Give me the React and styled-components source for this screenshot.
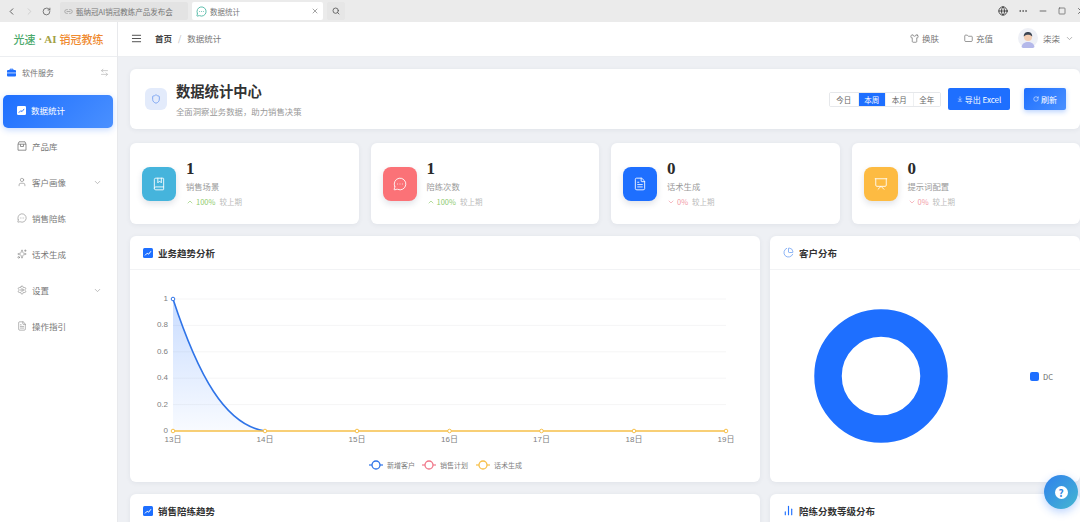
import styled, { createGlobalStyle } from "styled-components";
import {
  ArrowLeftRight,
  AlignJustify,
  BookMarked,
  ChartNoAxesColumn,
  ChartPie,
  ChevronDown,
  ChevronLeft,
  ChevronRight,
  ChevronUp,
  Ellipsis,
  FileText,
  Folder,
  Globe,
  Link2,
  MessageCircleMore,
  Minus,
  Presentation,
  RotateCw,
  Search,
  Settings,
  Shield,
  Shirt,
  Sparkles,
  Square,
  User,
  X,
  ArrowDownToLine,
} from "lucide-react";

const GlobalStyle = createGlobalStyle`
  html, body {
    margin: 0;
    height: 100%;
    overflow: hidden;
    background: #eef0f4;
    font-family: "Noto Sans CJK SC", "Noto Sans", "Liberation Sans", sans-serif;
  }
  * { box-sizing: border-box; }
`;

const Page = styled.div`
  width: 1080px;
  height: 522px;
  display: flex;
  flex-direction: column;
  overflow: hidden;
  position: relative;
`;

/* browser chrome */
const BrowserBar = styled.div`
  height: 22px;
  flex: none;
  display: flex;
  align-items: center;
  background: #ebebeb;
  color: #555;
  padding: 0 0 0 6px;
`;

const NavIcons = styled.div`
  display: flex;
  align-items: center;
  gap: 7px;
  width: 54px;
`;

const Tab = styled.div`
  height: 18px;
  width: ${(p) => p.$width}px;
  margin-right: 4px;
  display: flex;
  align-items: center;
  gap: 3px;
  padding: 0 4px;
  font-size: 7.5px;
  color: #777;
  border-radius: 2px;
  background: ${(p) => (p.$active ? "#fff" : "#e3e3e3")};
`;

const TabTitle = styled.span`
  flex: 1;
  white-space: nowrap;
  overflow: hidden;
`;

const SearchBox = styled.div`
  width: 18px;
  height: 18px;
  display: flex;
  align-items: center;
  justify-content: center;
  background: #e6e6e6;
  border-radius: 2px;
`;

const WindowControls = styled.div`
  margin-left: auto;
  display: flex;
  align-items: center;
  gap: 10px;
  margin-right: -6px;
`;

const Body = styled.div`
  flex: 1;
  display: flex;
  min-height: 0;
`;

/* sidebar */
const Sidebar = styled.aside`
  width: 118px;
  flex: none;
  background: #fff;
  border-right: 1px solid #e8e9ec;
  display: flex;
  flex-direction: column;
`;

const Logo = styled.div`
  height: 35px;
  display: flex;
  align-items: center;
  justify-content: center;
  gap: 3px;
  font-size: 11px;
  font-weight: 500;
  white-space: nowrap;
  border-bottom: 1px solid #eceef1;
`;

const LogoPart = styled.span`
  color: ${(p) => p.$color};
  font-family: ${(p) => (p.$serif ? '"Liberation Serif", serif' : "inherit")};
  font-weight: ${(p) => (p.$serif ? 700 : 500)};
`;

const ServiceRow = styled.div`
  height: 32px;
  padding: 0 8px 2px 7px;
  display: flex;
  align-items: center;
  gap: 6px;
  font-size: 8px;
  color: #777;
`;

const ServiceLabel = styled.span`
  flex: 1;
`;

const Menu = styled.nav`
  margin-top: 6px;
  display: flex;
  flex-direction: column;
  gap: 3px;
  padding: 0 4px 0 3px;
`;

const MenuItem = styled.div`
  height: 33px;
  display: flex;
  align-items: center;
  gap: 5px;
  padding: 0 11px 3px 14px;
  font-size: 8.5px;
  border-radius: 5px;
  color: ${(p) => (p.$active ? "#fff" : "#777")};
  background: ${(p) =>
    p.$active ? "linear-gradient(135deg, #1e6fff, #4a90ff)" : "transparent"};
  box-shadow: ${(p) => (p.$active ? "0 2px 6px rgba(30,111,255,.25)" : "none")};
`;

const MenuLabel = styled.span`
  flex: 1;
`;

/* main column */
const Main = styled.main`
  flex: 1;
  min-width: 0;
  display: flex;
  flex-direction: column;
`;

const Header = styled.header`
  height: 35px;
  flex: none;
  background: #fff;
  display: flex;
  align-items: center;
  padding: 0 6px 2px 13px;
  color: #777;
  font-size: 8.5px;
  border-bottom: 1px solid #eceef1;
`;

const Crumbs = styled.div`
  display: flex;
  align-items: center;
  gap: 6px;
  margin-left: 13px;
`;

const CrumbHome = styled.span`
  font-weight: 700;
  color: #444;
`;

const CrumbSep = styled.span`
  color: #bbb;
`;

const HeaderActions = styled.div`
  margin-left: auto;
  display: flex;
  align-items: center;
  gap: 25px;
`;

const HeaderAction = styled.div`
  display: flex;
  align-items: center;
  gap: 3px;
`;

const UserBox = styled.div`
  display: flex;
  align-items: center;
  gap: 5px;
`;

const Content = styled.div`
  flex: 1;
  min-height: 0;
  display: flex;
  flex-direction: column;
  gap: 12px;
  padding: 12px 0 0 12px;
  overflow: hidden;
`;

const Card = styled.section`
  background: #fff;
  border-radius: 6px;
  box-shadow: 0 1px 5px rgba(40, 60, 90, 0.07);
`;

const Hero = styled(Card)`
  height: 60px;
  flex: none;
  margin-bottom: 2px;
  display: flex;
  align-items: center;
  padding: 0 14px 0 15px;
`;

const HeroIcon = styled.div`
  width: 22px;
  height: 22px;
  border-radius: 6px;
  background: #e3ebfb;
  color: #6f9bf0;
  display: flex;
  align-items: center;
  justify-content: center;
  margin-right: 9px;
`;

const HeroText = styled.div`
  display: flex;
  flex-direction: column;
  gap: 3px;
`;

const HeroTitle = styled.div`
  font-size: 14.3px;
  line-height: 20px;
  font-weight: 700;
  color: #333;
`;

const HeroSub = styled.div`
  font-size: 8.4px;
  line-height: 14px;
  color: #999;
`;

const HeroActions = styled.div`
  margin-left: auto;
  display: flex;
  align-items: center;
`;

const Segments = styled.div`
  display: flex;
  height: 15px;
  border: 1px solid #e6e8eb;
  border-radius: 2px;
  margin-right: 7px;
`;

const Segment = styled.div`
  width: 27.5px;
  display: flex;
  align-items: center;
  justify-content: center;
  font-size: 7.5px;
  color: ${(p) => (p.$active ? "#fff" : "#666")};
  background: ${(p) => (p.$active ? "#1e6fff" : "#fff")};
  border-left: ${(p) => (p.$first ? "none" : "1px solid #eef0f2")};
`;

const ActionButton = styled.button`
  height: 22px;
  width: ${(p) => p.$width}px;
  margin-left: ${(p) => p.$gap || 0}px;
  border: none;
  border-radius: 2px;
  padding: 0;
  display: flex;
  align-items: center;
  justify-content: center;
  gap: 2px;
  color: #fff;
  font-family: inherit;
  font-size: 8px;
  background: ${(p) =>
    p.$soft ? "linear-gradient(135deg, #1e6fff, #4a90ff)" : "#1e6fff"};
  box-shadow: ${(p) => (p.$soft ? "0 2px 5px rgba(30,111,255,.3)" : "none")};
`;

const StatsGrid = styled.div`
  flex: none;
  display: grid;
  grid-template-columns: repeat(4, 1fr);
  gap: 12px;
`;

const StatCard = styled(Card)`
  height: 81px;
  display: flex;
  align-items: center;
  gap: 10px;
  padding: 0 12px;
`;

const StatIcon = styled.div`
  width: 34px;
  height: 34px;
  flex: none;
  border-radius: 8px;
  background: ${(p) => p.$color};
  color: #fff;
  display: flex;
  align-items: center;
  justify-content: center;
  box-shadow: 0 3px 6px rgba(40, 60, 90, 0.14);
`;

const StatBody = styled.div`
  display: flex;
  flex-direction: column;
  padding-top: 3px;
`;

const StatValue = styled.div`
  font-family: "Liberation Serif", serif;
  font-weight: 700;
  font-size: 17px;
  line-height: 18px;
  color: #2a2a2a;
`;

const StatLabel = styled.div`
  font-size: 8.3px;
  line-height: 16px;
  color: #999;
`;

const StatChange = styled.div`
  display: flex;
  align-items: center;
  gap: 2px;
  font-size: 7.5px;
  line-height: 16px;
  color: #bbb;
`;

const ChangeValue = styled.span`
  color: ${(p) => (p.$up ? "#8fcb6e" : "#f29aa6")};
  margin-right: 2px;
`;

const PanelRow = styled.div`
  flex: none;
  display: grid;
  grid-template-columns: 630px 310px;
  gap: 10px;
`;

const Panel = styled(Card)`
  height: ${(p) => p.$height}px;
  display: flex;
  flex-direction: column;
`;

const PanelHead = styled.div`
  height: 34px;
  flex: none;
  display: flex;
  align-items: center;
  gap: 5px;
  padding: 0 13px;
  border-bottom: 1px solid #f2f3f5;
  font-size: 9.5px;
  font-weight: 700;
  color: #333;
`;

const DonutBody = styled.div`
  flex: 1;
  display: flex;
  align-items: center;
  padding-left: 44px;
`;

const Legend = styled.div`
  display: flex;
  align-items: center;
  gap: 4px;
  margin-left: 82px;
  font-size: 7.5px;
  color: #666;
`;

const LegendSwatch = styled.span`
  width: 9px;
  height: 9px;
  border-radius: 2px;
  background: #1e6fff;
`;

const HelpButton = styled.div`
  position: absolute;
  left: 1044px;
  top: 475px;
  width: 34px;
  height: 34px;
  border-radius: 50%;
  background: linear-gradient(135deg, #2f80ed, #45b7d1);
  box-shadow: 0 3px 8px rgba(30, 111, 255, 0.3);
  display: flex;
  align-items: center;
  justify-content: center;
`;

const HelpMark = styled.span`
  width: 13px;
  height: 13px;
  border-radius: 50%;
  background: #fff;
  color: #2f86e0;
  font-size: 10px;
  font-weight: 700;
  line-height: 13px;
  text-align: center;
`;

const ChartLabel = styled.text`
  font-size: ${(p) => p.$size || 8}px;
  fill: #808080;
  font-family: "Liberation Sans", "Noto Sans CJK SC", sans-serif;
`;

const ChartSvg = styled.svg`
  display: block;
`;

const TrendBox = ({ size = 10, bg = "#1e6fff", fg = "#fff" }) => (
  <svg width={size} height={size} viewBox="0 0 10 10" style={{ flex: "none" }}>
    <rect width="10" height="10" rx="1.5" fill={bg} />
    <path d="M2 7.4 4.2 5.2 5.6 6.2 8 3.2" fill="none" stroke={fg} strokeWidth="1" />
  </svg>
);

const CaseIcon = () => (
  <svg width="9" height="9" viewBox="0 0 9 9" style={{ flex: "none" }}>
    <path d="M3 2V1.200h3V2" fill="none" stroke="#1e6fff" />
    <rect y="2" width="9" height="6.500" rx="1" fill="#1e6fff" />
    <rect y="4.600" width="9" height="0.700" fill="#fff" />
  </svg>
);

const ProductIcon = () => (
  <svg width="10" height="10" viewBox="0 0 10 10" fill="none" stroke="currentColor" strokeWidth="0.8" style={{ flex: "none" }}>
    <path d="M1 3.200 2 .8h6l1 2.400V9.200H1z" />
    <path d="M1 3.200h8M3.500 3.200V5.500h3V3.200" />
  </svg>
);

const Avatar = () => (
  <svg width="20" height="20" viewBox="0 0 20 20">
    <circle cx="10" cy="10" r="10" fill="#eef0f6" />
    <path d="M3.500 19c.6-3.600 3.200-5 6.500-5s5.900 1.400 6.500 5a10 10 0 0 1-13 0z" fill="#b4b8ea" />
    <circle cx="10" cy="9" r="4" fill="#f3cdb3" />
    <path d="M5.800 8.500C5.600 5.200 7.800 4 10 4s4.400 1.200 4.200 4.500C13 7 11 6.700 10 6.700S7 7 5.800 8.500z" fill="#3d4654" />
  </svg>
);

const days = ["13日", "14日", "15日", "16日", "17日", "18日", "19日"];
const dayX = [43, 135, 227, 319.5, 411.5, 504, 596];
const ticks = [
  ["1", 29],
  ["0.8", 55.4],
  ["0.6", 81.8],
  ["0.4", 108.2],
  ["0.2", 134.6],
  ["0", 161],
];
const legend = [
  ["新增客户", 246, "#2f74e8"],
  ["销售计划", 299, "#f0788a"],
  ["话术生成", 353, "#f7c04a"],
];

const TrendChart = () => (
  <ChartSvg width="630" height="212" viewBox="0 0 630 212">
    <defs>
      <linearGradient id="area" x1="0" y1="0" x2="0" y2="1">
        <stop offset="0" stopColor="#1e6fff" stopOpacity="0.24" />
        <stop offset="1" stopColor="#1e6fff" stopOpacity="0.03" />
      </linearGradient>
    </defs>
    {ticks.map(([label, y]) => (
      <g key={label}>
        <line x1="43" x2="596" y1={y} y2={y} stroke="#f5f5f6" />
        <ChartLabel x="38" y={y + 2} textAnchor="end">
          {label}
        </ChartLabel>
      </g>
    ))}
    <path d="M43 29C68 105 95 155 135 161H43Z" fill="url(#area)" />
    <path d="M43 29C68 105 95 155 135 161" fill="none" stroke="#2f74e8" strokeWidth="1.600" />
    <line x1="43" x2="596" y1="161" y2="161" stroke="#f7c04a" strokeWidth="1.600" />
    <circle cx="43" cy="29" r="1.800" fill="#fff" stroke="#2f74e8" />
    {days.map((day, i) => (
      <g key={day}>
        <circle cx={dayX[i]} cy="161" r="1.800" fill="#fff" stroke="#f7c04a" />
        <ChartLabel x={dayX[i]} y="172" textAnchor="middle">
          {day}
        </ChartLabel>
      </g>
    ))}
    {legend.map(([label, x, color]) => (
      <g key={label}>
        <line x1={x - 7} x2={x + 7} y1="195" y2="195" stroke={color} strokeWidth="1.200" />
        <circle cx={x} cy="195" r="4" fill="#fff" stroke={color} strokeWidth="1.300" />
        <ChartLabel x={x + 11} y="197.500" $size={7}>
          {label}
        </ChartLabel>
      </g>
    ))}
  </ChartSvg>
);

const Donut = () => (
  <svg width="134" height="134" viewBox="0 0 134 134">
    <circle cx="67" cy="67" r="53" fill="none" stroke="#1e6fff" strokeWidth="27.500" />
  </svg>
);

const menuItems = [
  { label: "数据统计", icon: <TrendBox bg="#fff" fg="#1e6fff" size={9} />, active: true },
  { label: "产品库", icon: <ProductIcon /> },
  { label: "客户画像", icon: <User size={10} strokeWidth={1.3} />, more: true },
  { label: "销售陪练", icon: <MessageCircleMore size={10} strokeWidth={1.3} /> },
  { label: "话术生成", icon: <Sparkles size={10} strokeWidth={1.3} /> },
  { label: "设置", icon: <Settings size={10} strokeWidth={1.3} />, more: true },
  { label: "操作指引", icon: <FileText size={10} strokeWidth={1.3} /> },
];

const stats = [
  { value: 1, label: "销售场景", change: "100%", up: true, color: "#45b4dc", Icon: BookMarked },
  { value: 1, label: "陪练次数", change: "100%", up: true, color: "#fb7277", Icon: MessageCircleMore },
  { value: 0, label: "话术生成", change: "0%", up: false, color: "#1e6fff", Icon: FileText },
  { value: 0, label: "提示词配置", change: "0%", up: false, color: "#fdbb42", Icon: Presentation },
];

export default function App() {
  return (
    <Page>
      <GlobalStyle />
      <BrowserBar>
        <NavIcons>
          <ChevronLeft size={11} />
          <ChevronRight size={11} color="#ccc" />
          <RotateCw size={9} />
        </NavIcons>
        <Tab $width={128}>
          <Link2 size={9} color="#999" />
          <TabTitle>甄纳冠AI销冠教练产品发布会</TabTitle>
        </Tab>
        <Tab $width={131} $active>
          <MessageCircleMore size={11} color="#52b9a6" />
          <TabTitle>数据统计</TabTitle>
          <X size={8} />
        </Tab>
        <SearchBox>
          <Search size={8} strokeWidth={2.5} />
        </SearchBox>
        <WindowControls>
          <Globe size={10} color="#333" strokeWidth={2} />
          <Ellipsis size={10} />
          <Minus size={10} />
          <Square size={8} strokeWidth={2} />
          <X size={10} />
        </WindowControls>
      </BrowserBar>
      <Body>
        <Sidebar>
          <Logo>
            <LogoPart $color="#4aa96c">光速</LogoPart>
            <LogoPart $color="#a3a044" $serif>
              · AI
            </LogoPart>
            <LogoPart $color="#ef8a2f">销冠教练</LogoPart>
          </Logo>
          <ServiceRow>
            <CaseIcon />
            <ServiceLabel>软件服务</ServiceLabel>
            <ArrowLeftRight size={9} color="#bbb" />
          </ServiceRow>
          <Menu>
            {menuItems.map((item) => (
              <MenuItem key={item.label} $active={item.active}>
                {item.icon}
                <MenuLabel>{item.label}</MenuLabel>
                {item.more && <ChevronDown size={9} color="#aaa" />}
              </MenuItem>
            ))}
          </Menu>
        </Sidebar>
        <Main>
          <Header>
            <AlignJustify size={11} color="#444" />
            <Crumbs>
              <CrumbHome>首页</CrumbHome>
              <CrumbSep>/</CrumbSep>
              <span>数据统计</span>
            </Crumbs>
            <HeaderActions>
              <HeaderAction>
                <Shirt size={9} />
                换肤
              </HeaderAction>
              <HeaderAction>
                <Folder size={9} />
                充值
              </HeaderAction>
              <UserBox>
                <Avatar />
                <span>柒柒</span>
                <ChevronDown size={9} color="#999" />
              </UserBox>
            </HeaderActions>
          </Header>
          <Content>
            <Hero>
              <HeroIcon>
                <Shield size={10} />
              </HeroIcon>
              <HeroText>
                <HeroTitle>数据统计中心</HeroTitle>
                <HeroSub>全面洞察业务数据，助力销售决策</HeroSub>
              </HeroText>
              <HeroActions>
                <Segments>
                  <Segment $first>今日</Segment>
                  <Segment $active>本周</Segment>
                  <Segment>本月</Segment>
                  <Segment>全年</Segment>
                </Segments>
                <ActionButton $width={62}>
                  <ArrowDownToLine size={6} />
                  导出 Excel
                </ActionButton>
                <ActionButton $width={42} $gap={14} $soft>
                  <RotateCw size={6} />
                  刷新
                </ActionButton>
              </HeroActions>
            </Hero>
            <StatsGrid>
              {stats.map(({ value, label, change, up, color, Icon }) => (
                <StatCard key={label}>
                  <StatIcon $color={color}>
                    <Icon size={14} strokeWidth={1.5} />
                  </StatIcon>
                  <StatBody>
                    <StatValue>{value}</StatValue>
                    <StatLabel>{label}</StatLabel>
                    <StatChange>
                      {up ? (
                        <ChevronUp size={8} color="#8fcb6e" />
                      ) : (
                        <ChevronDown size={8} color="#f29aa6" />
                      )}
                      <ChangeValue $up={up}>{change}</ChangeValue>
                      较上期
                    </StatChange>
                  </StatBody>
                </StatCard>
              ))}
            </StatsGrid>
            <PanelRow>
              <Panel $height={246}>
                <PanelHead>
                  <TrendBox />
                  业务趋势分析
                </PanelHead>
                <TrendChart />
              </Panel>
              <Panel $height={246}>
                <PanelHead>
                  <ChartPie size={11} color="#5b93f0" strokeWidth={1.5} />
                  客户分布
                </PanelHead>
                <DonutBody>
                  <Donut />
                  <Legend>
                    <LegendSwatch />
                    DC
                  </Legend>
                </DonutBody>
              </Panel>
            </PanelRow>
            <PanelRow>
              <Panel $height={200}>
                <PanelHead>
                  <TrendBox />
                  销售陪练趋势
                </PanelHead>
              </Panel>
              <Panel $height={200}>
                <PanelHead>
                  <ChartNoAxesColumn size={11} color="#1e6fff" strokeWidth={2.5} />
                  陪练分数等级分布
                </PanelHead>
              </Panel>
            </PanelRow>
          </Content>
        </Main>
      </Body>
      <HelpButton>
        <HelpMark>?</HelpMark>
      </HelpButton>
    </Page>
  );
}
